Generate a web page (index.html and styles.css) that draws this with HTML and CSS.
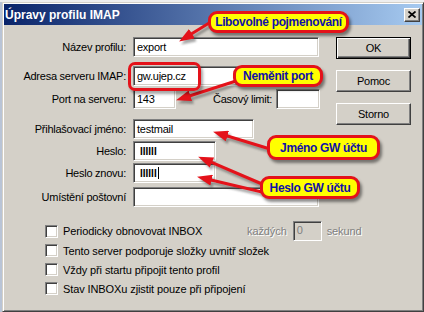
FILE: index.html
```html
<!DOCTYPE html>
<html lang="cs">
  <head>
    <meta charset="UTF-8" />
    <title>Úpravy profilu IMAP</title>
    <link rel="stylesheet" href="styles.css">
  </head>
  <body>
    <div class="dialog">
      <div class="titlebar">
        <span class="title">Úpravy profilu IMAP</span>
        <button class="close-btn">
          <svg width="8" height="7" viewBox="0 0 8 7"><path d="M0.5 0.5L7.5 6.5M7.5 0.5L0.5 6.5" stroke="#000" stroke-width="1.7" /></svg>
        </button>
      </div>

      <div class="content">
        <div class="top">
          <div class="form">
            <div class="row">
              <span class="row-label">Název profilu:</span>
              <div class="field field-wide">export</div>
            </div>
            <div class="row mt-9">
              <span class="row-label">Adresa serveru IMAP:</span>
              <div class="field field-wide">gw.ujep.cz</div>
            </div>
            <div class="row mt-3">
              <span class="row-label">Port na serveru:</span>
              <div class="field field-port">143</div>
              <span class="limit-label">Časový limit:</span>
              <div class="field field-limit"></div>
            </div>
            <div class="row mt-10">
              <span class="row-label">Přihlašovací jméno:</span>
              <div class="field field-login">testmail</div>
            </div>
            <div class="row mt-2">
              <span class="row-label">Heslo:</span>
              <div class="field field-pass"><span class="pass">IIIIII</span></div>
            </div>
            <div class="row mt-2">
              <span class="row-label">Heslo znovu:</span>
              <div class="field field-pass"><span class="pass">IIIIII</span><span class="caret"></span></div>
            </div>
            <div class="row mt-4">
              <span class="row-label">Umístění poštovní</span>
              <div class="field field-wide"></div>
            </div>
          </div>

          <div class="actions">
            <button class="btn btn-default">OK</button>
            <button class="btn">Pomoc</button>
            <button class="btn">Storno</button>
          </div>
        </div>

        <div class="options">
          <div class="opt opt-first">
            <label class="opt-label opt-label-fixed"><span class="check"></span>Periodicky obnovovat INBOX</label>
            <span class="disabled-text">každých</span>
            <div class="field field-disabled">0</div>
            <span class="disabled-text">sekund</span>
          </div>
          <div class="opt">
            <label class="opt-label"><span class="check"></span>Tento server podporuje složky uvnitř složek</label>
          </div>
          <div class="opt">
            <label class="opt-label"><span class="check"></span>Vždy při startu připojit tento profil</label>
          </div>
          <div class="opt">
            <label class="opt-label"><span class="check"></span>Stav INBOXu zjistit pouze při připojení</label>
          </div>
        </div>
      </div>
    </div>

    <!-- annotations drawn over the screenshot -->
    <svg class="arrows" width="424" height="312" viewBox="0 0 424 312">
      <defs>
        <marker id="head" markerUnits="userSpaceOnUse" markerWidth="15" markerHeight="11" refX="6" refY="5.5" orient="auto">
          <path d="M0 0L15 5.5L0 11z" fill="#e4121a" />
        </marker>
        <marker id="head-shadow" markerUnits="userSpaceOnUse" markerWidth="15" markerHeight="11" refX="6" refY="5.5" orient="auto">
          <path d="M0 0L15 5.5L0 11z" fill="#3a3a3a" />
        </marker>
        <filter id="blur"><feGaussianBlur stdDeviation="1.2" /></filter>
      </defs>
      <g class="arrow-shadow" transform="translate(2 3)" filter="url(#blur)" opacity="0.45">
        <path d="M214 20L186.8 36.8" marker-end="url(#head-shadow)" />
        <path d="M236 81L184.6 97.5" marker-end="url(#head-shadow)" />
        <path d="M270 149L221.7 134.3" marker-end="url(#head-shadow)" />
        <path d="M262 184L206.4 160.2" marker-end="url(#head-shadow)" />
        <path d="M262 192L205.8 178.8" marker-end="url(#head-shadow)" />
      </g>
      <g class="arrow">
        <path d="M214 20L186.8 36.8" marker-end="url(#head)" />
        <path d="M236 81L184.6 97.5" marker-end="url(#head)" />
        <path d="M270 149L221.7 134.3" marker-end="url(#head)" />
        <path d="M262 184L206.4 160.2" marker-end="url(#head)" />
        <path d="M262 192L205.8 178.8" marker-end="url(#head)" />
      </g>
    </svg>

    <div class="ring"></div>
    <div class="callout callout-name">Libovolné pojmenování</div>
    <div class="callout callout-port">Neměnit port</div>
    <div class="callout callout-login">Jméno GW účtu</div>
    <div class="callout callout-pass">Heslo GW účtu</div>
  </body>
</html>
```

FILE: styles.css
```css
:root {
  --face: #d4d0c8;
  --light: #fff;
  --shadow: #808080;
  --dark: #404040;
  --note-red: #e4121a;
  --note-yellow: #ffff00;
  --note-text: #1010a8;
}

* {
  box-sizing: border-box;
}

body {
  position: relative;
  width: 424px;
  height: 312px;
  margin: 0;
  overflow: hidden;

  font-family: "Liberation Sans", Arial, sans-serif;
  font-size: 11px;
  letter-spacing: -0.25px;
  color: #000;

  background: linear-gradient(#eeeeee 0 2px, #b9c4d6 2px);
}

.dialog {
  width: 422px;
  height: 310px;
  margin: 2px 0 0 2px;
  padding: 1px;

  display: flex;
  flex-direction: column;

  border: 1px solid;
  border-color: var(--face) var(--dark) var(--dark) var(--face);
  box-shadow: inset 1px 1px var(--light), inset -1px -1px var(--shadow);
  background: var(--face);
}

.titlebar {
  height: 21px;
  padding: 0 2px 0 1px;

  display: flex;
  align-items: center;
  justify-content: space-between;

  background: linear-gradient(90deg, #0a246a, #a6caf0);
}

.title {
  color: #fff;
  font-size: 12px;
  font-weight: bold;
  letter-spacing: 0;
}

.close-btn {
  width: 16px;
  height: 14px;
  padding: 0;

  display: flex;
  align-items: center;
  justify-content: center;

  border: 1px solid;
  border-color: var(--light) var(--dark) var(--dark) var(--light);
  box-shadow: inset -1px -1px var(--shadow);
  background: var(--face);
}

.content {
  flex: 1;
  display: flex;
  flex-direction: column;
}

.top {
  display: flex;
}

.form {
  flex: 1;
  padding-top: 12px;

  display: flex;
  flex-direction: column;
}

.row {
  height: 20px;
  display: flex;
  align-items: center;
}

.row-label {
  width: 122px;
  margin-right: 7px;
  text-align: right;
  white-space: nowrap;
}

.limit-label {
  margin: 0 4px 0 37px;
  white-space: nowrap;
}

.field {
  height: 20px;
  padding: 0 3px;

  display: flex;
  align-items: center;

  border: 1px solid;
  border-color: var(--shadow) var(--light) var(--light) var(--shadow);
  box-shadow: inset 1px 1px var(--dark), inset -1px -1px var(--face);
  background: #fff;
  white-space: nowrap;
}

.field-wide {
  width: 186px;
}

.field-port {
  width: 43px;
}

.field-limit {
  width: 44px;
}

.field-login {
  width: 121px;
}

.field-pass {
  width: 83px;
  padding-left: 6px;
}

.pass {
  font-size: 10px;
  font-weight: bold;
  letter-spacing: 0;
}

.caret {
  width: 1px;
  height: 12px;
  margin-left: 1px;
  background: #000;
}

.field-disabled {
  width: 29px;
  background: var(--face);
  color: var(--shadow);
  align-items: flex-start;
  padding-top: 2px;
}

.actions {
  width: 75px;
  margin-right: 11px;
  padding-top: 12px;

  display: flex;
  flex-direction: column;
  gap: 11px;
}

.btn {
  height: 22px;
  padding: 0;

  font-family: inherit;
  font-size: 11px;
  letter-spacing: -0.25px;
  color: #000;

  border: 1px solid;
  border-color: var(--light) var(--dark) var(--dark) var(--light);
  box-shadow: inset -1px -1px var(--shadow);
  background: var(--face);
}

.btn-default {
  border: 1px solid #000;
  box-shadow: inset 1px 1px var(--light), inset -1px -1px var(--dark), inset -2px -2px var(--shadow);
}

.options {
  margin-top: 14px;
  padding-left: 41px;
  letter-spacing: -0.1px;
}

.opt {
  height: 19px;
  display: flex;
  align-items: center;
}

.opt-first {
  height: 20px;
}

.opt-label {
  display: flex;
  align-items: center;
  white-space: nowrap;
}

.opt-label-fixed {
  width: 202px;
}

.check {
  width: 13px;
  height: 13px;
  margin-right: 5px;

  border: 1px solid;
  border-color: var(--shadow) var(--light) var(--light) var(--shadow);
  box-shadow: inset 1px 1px var(--dark), inset -1px -1px var(--face);
  background: #fff;
}

.disabled-text {
  color: var(--shadow);
  text-shadow: 1px 1px var(--light);
}

.opt-first .field-disabled {
  margin: 0 5px 0 6px;
}

.mt-2 {
  margin-top: 2px;
}

.mt-3 {
  margin-top: 3px;
}

.mt-4 {
  margin-top: 4px;
}

.mt-9 {
  margin-top: 9px;
}

.mt-10 {
  margin-top: 10px;
}

/* annotations */

.arrows {
  position: absolute;
  top: 0;
  left: 0;
  pointer-events: none;
}

.arrow path {
  stroke: var(--note-red);
  stroke-width: 3;
  fill: none;
}

.arrow-shadow path {
  stroke: #3a3a3a;
  stroke-width: 3;
  fill: none;
}

.ring {
  position: absolute;
  left: 128px;
  top: 62px;
  width: 73px;
  height: 29px;

  border: 3px solid var(--note-red);
  border-radius: 7px;
  box-shadow: 2px 3px 3px rgba(0, 0, 0, 0.35);
}

.callout {
  position: absolute;

  display: flex;
  align-items: center;
  justify-content: center;

  font-size: 12px;
  font-weight: bold;
  letter-spacing: -0.35px;
  color: var(--note-text);

  border: 3px solid var(--note-red);
  border-radius: 9px;
  background: var(--note-yellow);
  box-shadow: 2px 3px 3px rgba(0, 0, 0, 0.45);
}

.callout-name {
  left: 208px;
  top: 11px;
  width: 141px;
  height: 22px;
}

.callout-port {
  left: 233px;
  top: 65px;
  width: 90px;
  height: 22px;
}

.callout-login {
  left: 267px;
  top: 135px;
  width: 113px;
  height: 25px;
}

.callout-pass {
  left: 260px;
  top: 176px;
  width: 100px;
  height: 23px;
}
```
